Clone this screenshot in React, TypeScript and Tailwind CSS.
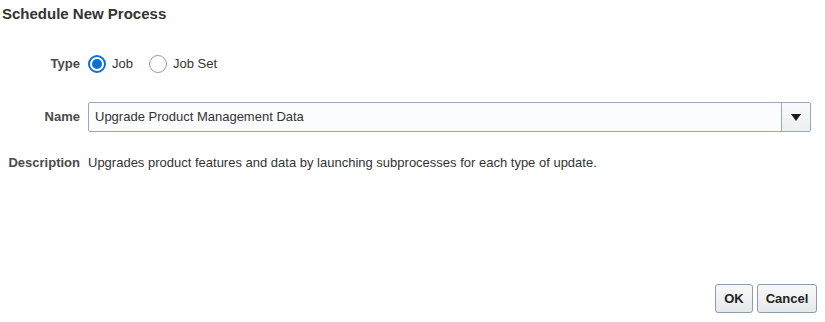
import { useState } from "react";

const Radio = ({ checked, label, onClick }: { checked: boolean; label: string; onClick: () => void }) => (
  <button type="button" onClick={onClick} className="flex items-center gap-[6px]">
    <span
      className={
        checked
          ? "flex h-[18px] w-[18px] items-center justify-center rounded-full border-2 border-[#0b6fd6] bg-white"
          : "flex h-[18px] w-[18px] items-center justify-center rounded-full border border-[#8c9cab] bg-white"
      }
    >
      {checked && <span className="h-[10px] w-[10px] rounded-full bg-[#0b6fd6]" />}
    </span>
    <span className="text-[13px] text-[#333]">{label}</span>
  </button>
);

const App = () => {
  const [type, setType] = useState("job");

  return (
    <div className="flex h-[322px] w-[825px] flex-col bg-white font-['Liberation_Sans',Arial,sans-serif] text-[#333]">
      <h1 className="pl-[2px] pt-[4px] text-[15px] font-bold leading-[20px] text-[#333]">Schedule New Process</h1>

      <div className="mt-[30px] grid grid-cols-[80px_1fr] items-center gap-x-[8px]">
        <span className="text-right text-[13px] font-bold text-[#4a4a4a]">Type</span>
        <div className="flex h-[20px] items-center gap-[16px]">
          <Radio checked={type === "job"} label="Job" onClick={() => setType("job")} />
          <Radio checked={type === "jobset"} label="Job Set" onClick={() => setType("jobset")} />
        </div>

        <span className="mt-[28px] text-right text-[13px] font-bold text-[#4a4a4a]">Name</span>
        <div className="mt-[28px] mr-[14px] flex h-[30px] rounded-[2px] border border-[#98a8b8] bg-[#fbfcfe]">
          <span className="flex flex-1 items-center pl-[6px] text-[13px] text-[#333]">Upgrade Product Management Data</span>
          <span className="flex w-[29px] items-center justify-center border-l border-[#98a8b8] bg-gradient-to-b from-[#f8f9fa] to-[#eceff2]">
            <svg width="10" height="7" viewBox="0 0 10 7">
              <path d="M0 0h10L5 7z" fill="#1a1a1a" />
            </svg>
          </span>
        </div>

        <span className="mt-[21px] text-right text-[13px] font-bold text-[#4a4a4a]">Description</span>
        <span className="mt-[21px] text-[13px] text-[#333]">
          Upgrades product features and data by launching subprocesses for each type of update.
        </span>
      </div>

      <div className="mt-auto mb-[9px] mr-[8px] flex justify-end gap-[4px]">
        <button className="h-[29px] w-[38px] rounded-[3px] border border-[#8d9dad] bg-gradient-to-b from-[#f7f8f9] to-[#e6e9ec] text-[13px] font-bold text-[#222]">
          OK
        </button>
        <button className="h-[29px] w-[60px] rounded-[3px] border border-[#8d9dad] bg-gradient-to-b from-[#f7f8f9] to-[#e6e9ec] text-[13px] font-bold text-[#222]">
          Cancel
        </button>
      </div>
    </div>
  );
};

export default App;
